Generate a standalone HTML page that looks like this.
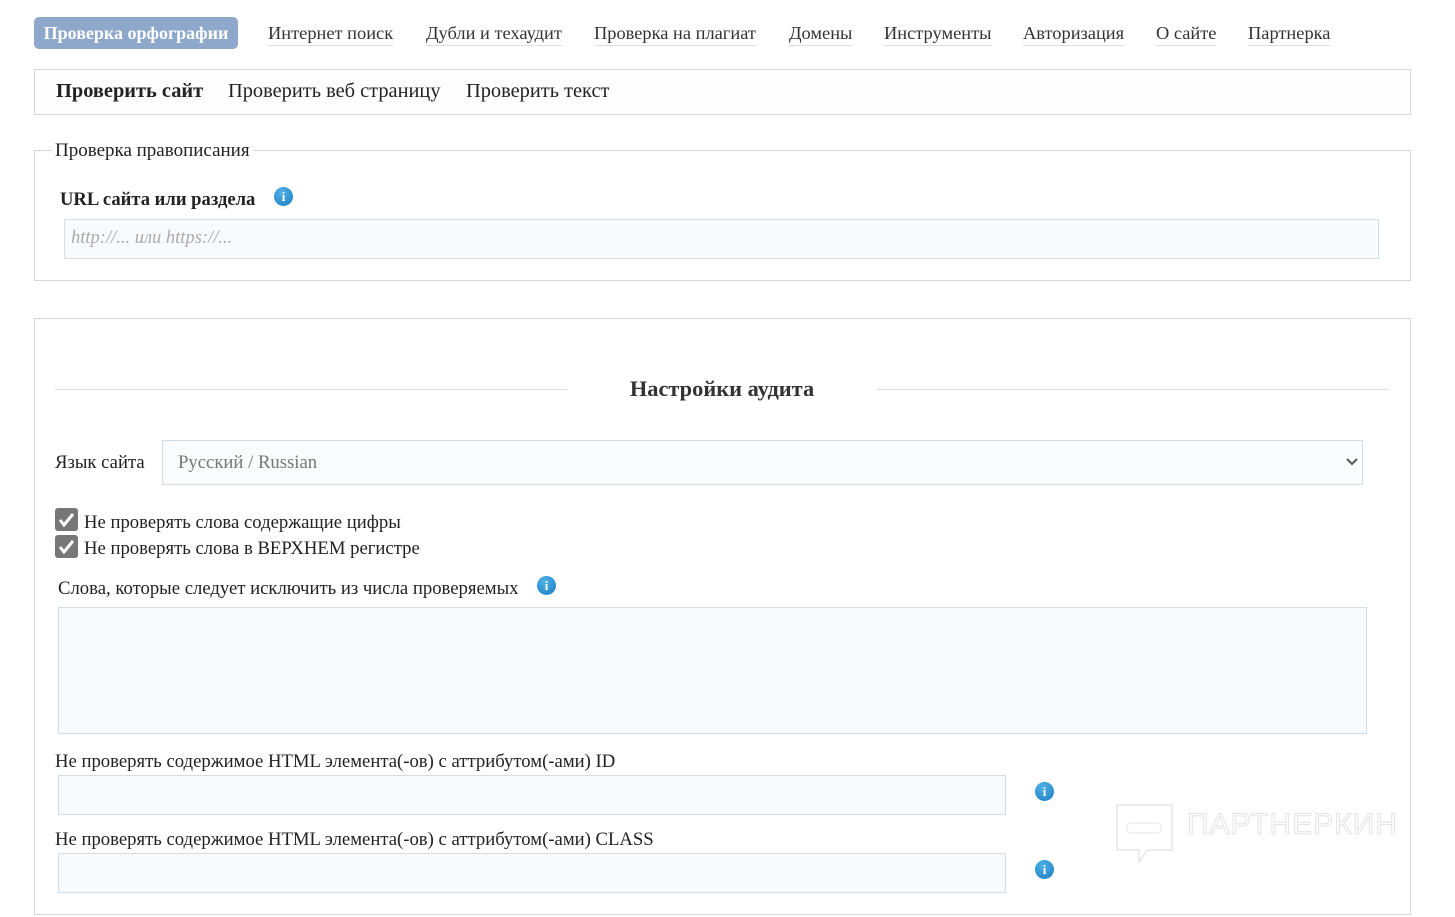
<!DOCTYPE html>
<html><head><meta charset="utf-8"><style>
body{margin:0;width:1455px;height:917px;background:#fff;font-family:"Liberation Serif","Noto Serif CJK SC",serif;color:#222;position:relative;overflow:hidden}
.a{position:absolute;white-space:nowrap}
.nav{font-size:18px;color:#333;top:22px;border-bottom:1px solid #dcdcdc;line-height:22px;padding-bottom:1px}
.box{position:absolute;border:1px solid #d6d6d6;box-sizing:border-box}
.inp{position:absolute;background:#f8fbfe;border:1px solid #d3dde6;box-sizing:border-box}
.info{position:absolute;width:19px;height:19px;border-radius:50%;background:radial-gradient(circle at 40% 30%,#4fb1e6,#1a7cc0);color:#fff;font:bold 13px "Liberation Serif",serif;text-align:center;line-height:19px}
.cb{position:absolute;width:23px;height:23px;background:#777;border-radius:3px}
.t{font-size:18.7px}
</style></head><body>
<div class="a" style="left:34px;top:17px;width:204px;height:32px;background:#8ea8cc;border-radius:5px;color:#fff;font-weight:bold;font-size:18px;line-height:32px;text-align:center">Проверка орфографии</div>
<div class="a nav" style="left:268px;font-size:18.4px">Интернет поиск</div>
<div class="a nav" style="left:426px;font-size:18.4px">Дубли и техаудит</div>
<div class="a nav" style="left:594px;font-size:18.4px">Проверка на плагиат</div>
<div class="a nav" style="left:789px;font-size:18.4px">Домены</div>
<div class="a nav" style="left:884px;font-size:18.4px">Инструменты</div>
<div class="a nav" style="left:1023px;font-size:18.4px">Авторизация</div>
<div class="a nav" style="left:1156px;font-size:18.4px">О сайте</div>
<div class="a nav" style="left:1248px;font-size:18.4px">Партнерка</div>

<div class="box" style="left:34px;top:69px;width:1377px;height:46px;background:#fdfdfd"></div>
<div class="a" style="left:56px;top:80px;font-size:20.4px;font-weight:bold">Проверить сайт</div>
<div class="a" style="left:228px;top:80px;font-size:20.4px">Проверить веб страницу</div>
<div class="a" style="left:466px;top:80px;font-size:20.4px">Проверить текст</div>

<div class="box" style="left:34px;top:150px;width:1377px;height:131px"></div>
<div class="a" style="left:52px;top:140px;background:#fff;padding:0 3px;font-size:19px">Проверка правописания</div>
<div class="a" style="left:60px;top:189px;font-size:18.6px;font-weight:bold">URL сайта или раздела</div>
<div class="info" style="left:274px;top:187px">i</div>
<div class="inp" style="left:64px;top:219px;width:1315px;height:40px"></div>
<div class="a" style="left:71px;top:228px;font-size:18.5px;font-style:italic;color:#aaa">http://... или https://...</div>

<div class="box" style="left:34px;top:318px;width:1377px;height:597px"></div>
<div class="a" style="left:55px;top:389px;width:512px;height:1px;background:#ddd"></div>
<div class="a" style="left:877px;top:389px;width:512px;height:1px;background:#ddd"></div>
<div class="a" style="left:567px;top:376px;width:310px;text-align:center;font-size:22.4px;font-weight:bold;color:#333">Настройки аудита</div>

<div class="a t" style="left:55px;top:452px">Язык сайта</div>
<div class="inp" style="left:162px;top:440px;width:1201px;height:45px;background:#f9fbfd"></div>
<div class="a t" style="left:178px;top:452px;color:#777">Русский / Russian</div>
<svg class="a" style="left:1345px;top:457px" width="14" height="10"><path d="M2 2l5 5 5-5" stroke="#555" stroke-width="2" fill="none"/></svg>

<div class="cb" style="left:55px;top:508px"></div>
<svg class="a" style="left:55px;top:508px" width="23" height="23"><path d="M5 12l4 5 9-11" stroke="#fff" stroke-width="3" fill="none"/></svg>
<div class="a t" style="left:84px;top:512px">Не проверять слова содержащие цифры</div>
<div class="cb" style="left:55px;top:535px"></div>
<svg class="a" style="left:55px;top:535px" width="23" height="23"><path d="M5 12l4 5 9-11" stroke="#fff" stroke-width="3" fill="none"/></svg>
<div class="a t" style="left:84px;top:538px">Не проверять слова в ВЕРХНЕМ регистре</div>

<div class="a t" style="left:58px;top:578px">Слова, которые следует исключить из числа проверяемых</div>
<div class="info" style="left:537px;top:576px">i</div>
<div class="inp" style="left:58px;top:607px;width:1309px;height:127px"></div>

<div class="a t" style="left:55px;top:751px">Не проверять содержимое HTML элемента(-ов) с аттрибутом(-ами) ID</div>
<div class="inp" style="left:58px;top:775px;width:948px;height:40px"></div>
<div class="info" style="left:1035px;top:782px">i</div>

<div class="a t" style="left:55px;top:829px">Не проверять содержимое HTML элемента(-ов) с аттрибутом(-ами) CLASS</div>
<div class="inp" style="left:58px;top:853px;width:948px;height:40px"></div>
<div class="info" style="left:1035px;top:860px">i</div>

<svg class="a" style="left:1115px;top:803px" width="60" height="62"><path d="M2 2h55v45H32l-8 12v-12H2z" stroke="#e6e6e6" stroke-width="1.5" fill="none"/><rect x="12" y="20" width="34" height="10" rx="4" stroke="#e6e6e6" fill="none"/></svg>
<div class="a" style="left:1187px;top:808px;font-family:'Liberation Sans',sans-serif;font-size:30px;letter-spacing:1px;color:#fff;-webkit-text-stroke:1px #e3e3e3">ПАРТНЕРКИН</div>
</body></html>
